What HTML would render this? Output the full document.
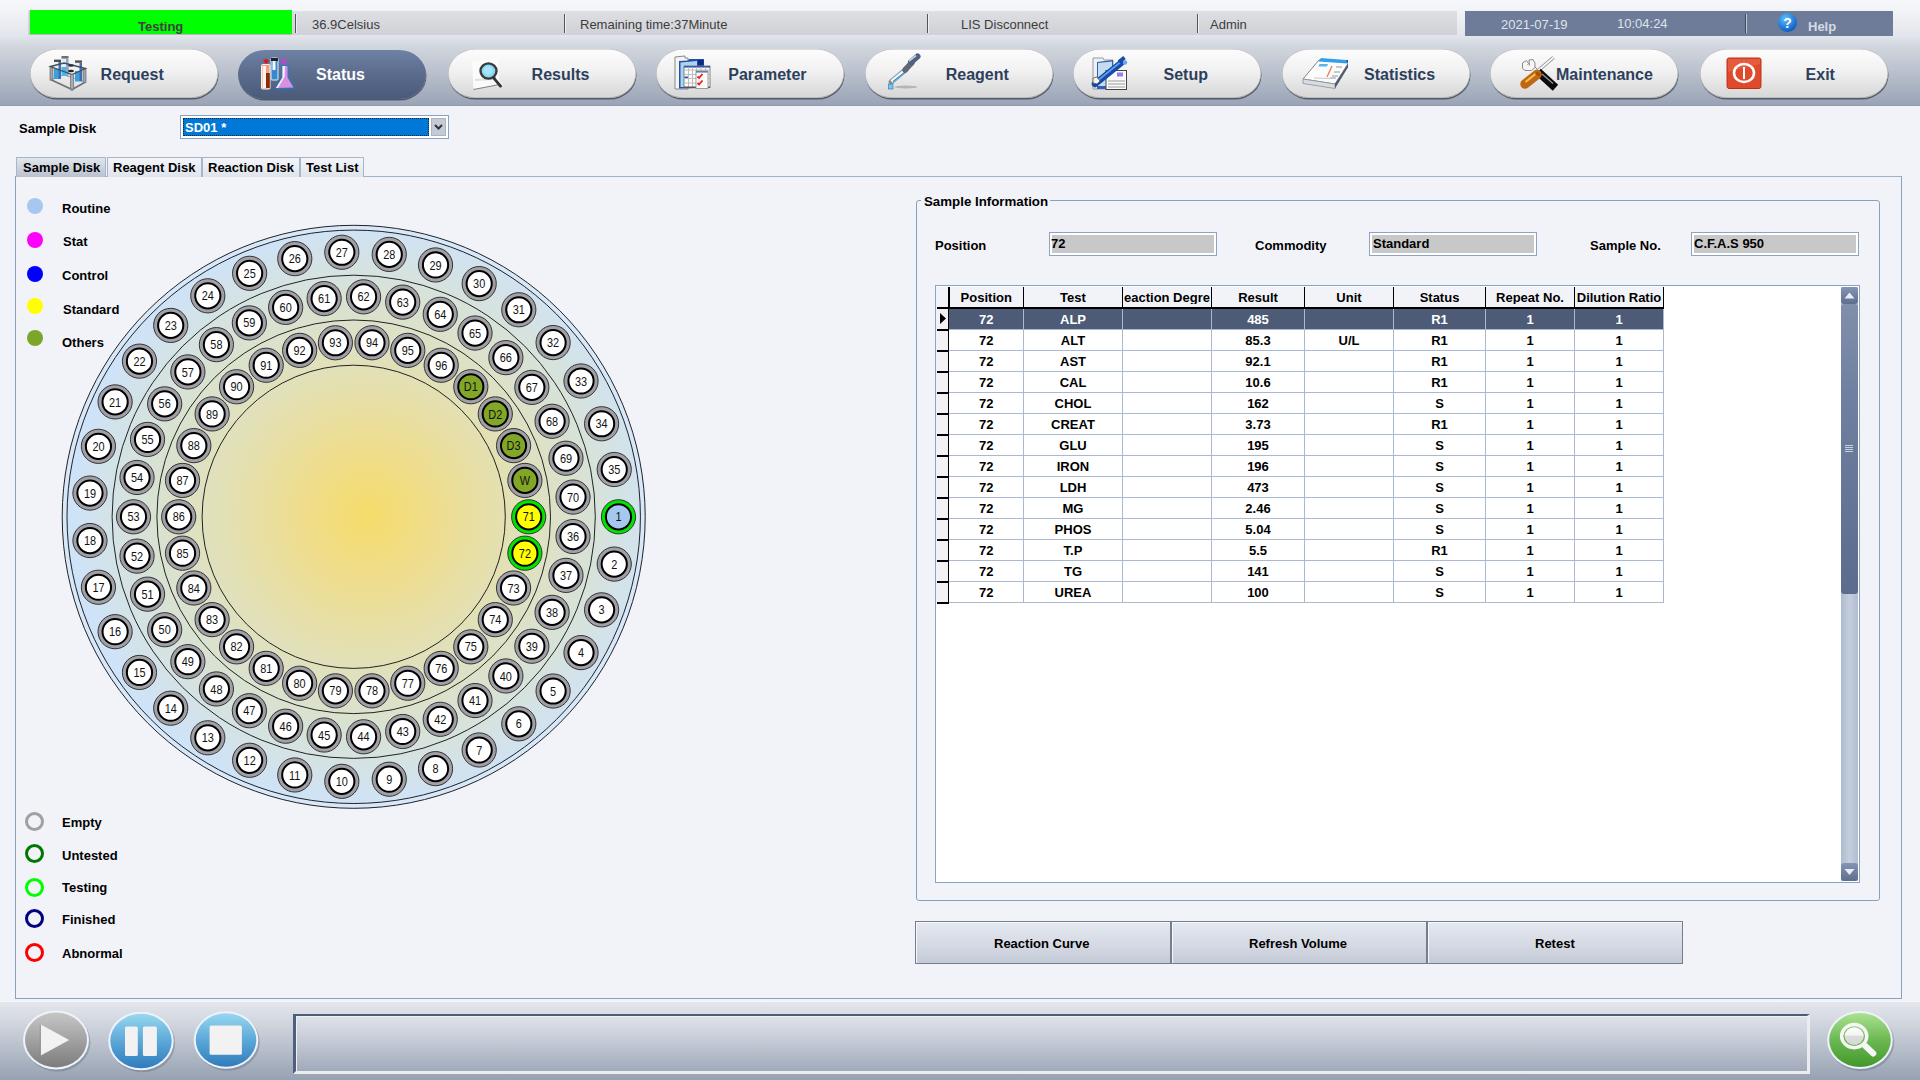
<!DOCTYPE html>
<html><head><meta charset="utf-8">
<style>
*{margin:0;padding:0;box-sizing:border-box}
html,body{width:1920px;height:1080px;overflow:hidden}
body{position:relative;background:#f2f3f8;font-family:"Liberation Sans",sans-serif;color:#000}
.a{position:absolute}
.t{position:absolute;white-space:nowrap;line-height:13px;font-size:13px}
.b{font-weight:bold}
#hdr{left:0;top:0;width:1920px;height:106px;background:linear-gradient(#f7f8fc 0px,#f3f4f8 10px,#e2e5eb 36px,#d2d6de 46px,#bac1cd 72px,#98a3b5 106px)}
#strip{left:28px;top:11px;width:1429px;height:24px;background:linear-gradient(#dedfe3,#cfd1d6)}
.sep{position:absolute;top:14px;width:2px;height:19px;border-left:1px solid #555;border-right:1px solid #f0f0f0}
.st{color:#3c3c3c}
#green{left:30px;top:10px;width:262px;height:24px;background:#00ff00;box-shadow:-1px 0 0 #c8cace, 0 1px 0 #b8bac0}
#datebox{left:1465px;top:11px;width:428px;height:25px;background:#6e7c9a}
.nav{position:absolute;top:48.5px;width:188px;height:49px;border-radius:27px/24.5px;background:linear-gradient(#fcfcfc 0%,#f1f1f1 45%,#d6d6d6 100%);box-shadow:0.5px 1.5px 0.5px rgba(70,75,90,.85), inset 0 0 0 0.6px rgba(110,110,110,.45)}
.nav.act{background:linear-gradient(#6f82a3 0%,#5a6b8c 50%,#4a5a7a 100%);box-shadow:0.5px 1.5px 0.5px rgba(50,55,70,.7)}
.nt{position:absolute;font-size:16px;line-height:16px;font-weight:bold;color:#2d3f5c;white-space:nowrap;top:67px}
.nav svg{position:absolute}
#panel{left:15px;top:176px;width:1887px;height:823px;border:1px solid #8aa0be;border-top-color:#a0b2c8}
.tab{position:absolute;top:157px;height:20px;border:1px solid #a9b6ca;border-bottom:none;background:linear-gradient(#f3f5f9,#dfe4ec)}
.tab.act{background:linear-gradient(#e2e6ed,#b9c1ce)}
.leg{position:absolute;width:16px;height:16px;border-radius:50%}
.lr{position:absolute;width:19px;height:19px;border-radius:50%;border:3px solid}
#grp{left:916px;top:200px;width:964px;height:701px;border:1px solid #86a0c0;border-radius:3px}
.fld{position:absolute;height:24px;border:1px solid #8ea2c2;background:#fff;padding:2px}
.fld div{width:100%;height:100%;background:#c8c8c8}
#tbl{left:935px;top:285px;width:925px;height:598px;border:1px solid #8ca4c4;background:#fff;overflow:hidden}
.btn{position:absolute;top:921px;height:43px;border:1px solid #747e8e;background:linear-gradient(#e6e9f0,#d3d8e2 60%,#c4cad6);box-shadow:inset 1px 1px 0 #f6f7fa}
#bot{left:0;top:1001px;width:1920px;height:79px;border-top:1px solid #f6f7fa;background:linear-gradient(#e3e6ec 0%,#d6dae2 20%,#bfc6d1 50%,#96a1b2 100%)}
</style></head><body>
<div id="hdr" class="a"></div>
<div class="a" style="left:0;top:104.5px;width:1920px;height:1.5px;background:#8e99ab"></div>
<div id="strip" class="a"></div>
<div id="green" class="a"></div>
<div class="t b" style="left:138px;top:19.5px;color:#404040">Testing</div>
<div class="sep" style="left:295px"></div>
<div class="t st" style="left:312px;top:18px">36.9Celsius</div>
<div class="sep" style="left:564px"></div>
<div class="t st" style="left:580px;top:18px">Remaining time:37Minute</div>
<div class="sep" style="left:927px"></div>
<div class="t st" style="left:961px;top:18px">LIS Disconnect</div>
<div class="sep" style="left:1197px"></div>
<div class="t st" style="left:1210px;top:18px">Admin</div>
<div id="datebox" class="a"></div>
<div class="t" style="left:1501px;top:18px;color:#dfe3ea">2021-07-19</div>
<div class="t" style="left:1617px;top:17px;color:#dfe3ea">10:04:24</div>
<div class="sep" style="left:1745px;border-left-color:#404a60;border-right-color:#c0c8d8"></div>
<svg class="a" style="left:1777px;top:12px" width="21" height="21" viewBox="0 0 21 21"><defs><radialGradient id="hg" cx="0.4" cy="0.3" r="0.7"><stop offset="0" stop-color="#5fc0ff"/><stop offset="1" stop-color="#0a5cc8"/></radialGradient></defs><circle cx="10.5" cy="10.5" r="9.5" fill="url(#hg)"/><text x="10.5" y="16" font-family="Liberation Sans" font-weight="bold" font-size="14" fill="#fff" text-anchor="middle">?</text></svg>
<div class="t b" style="left:1808px;top:20px;color:#d6dbe4">Help</div>

<div class="nav" style="left:30px;top:48.5px"></div>
<svg class="a" style="left:44px;top:50px" width="50" height="46" viewBox="0 0 50 46">
<path d="M6.5 29.5 L28 39.5 L41.5 32" fill="none" stroke="#707478" stroke-width="1.8"/>
<path d="M6.5 29.5 L20 25 L41.5 32" fill="none" stroke="#9a9ea4" stroke-width="1"/>
<rect x="6" y="16.5" width="3" height="13.5" fill="#a0a4aa" stroke="#6a6e74" stroke-width=".7"/>
<rect x="39" y="18.5" width="3" height="14" fill="#a0a4aa" stroke="#6a6e74" stroke-width=".7"/>
<rect x="17.5" y="6" width="7" height="20" fill="#e4eef6"/><rect x="17.5" y="17" width="7" height="9" fill="#4ab4ec"/><rect x="17.5" y="6" width="7" height="2.6" fill="#707070"/><rect x="22" y="9" width="2.5" height="16" fill="#90a8c0"/>
<rect x="10" y="9.6" width="7" height="19.5" fill="#e8f2fa"/><rect x="10" y="19" width="7" height="10" fill="#3aa0e0"/><rect x="10" y="9.6" width="7" height="2.4" fill="#505050"/><rect x="14.5" y="12" width="2.5" height="17" fill="#3a70b0"/>
<rect x="31" y="10.4" width="7" height="21" fill="#e8f2fa"/><rect x="31" y="21" width="7" height="10.5" fill="#3aa0e0"/><rect x="31" y="10.4" width="7" height="2.4" fill="#505050"/><rect x="35.5" y="13" width="2.5" height="18" fill="#3a70b0"/>
<path d="M6.5 16.5 L20 13 L41.5 18.5 L28 24.5 Z" fill="none" stroke="#4a4e54" stroke-width="1.3"/>
<ellipse cx="27" cy="15.5" rx="3" ry="1.2" fill="#333"/><ellipse cx="27" cy="21" rx="3" ry="1.2" fill="#222"/>
<rect x="26.5" y="24.5" width="3.2" height="15" fill="#a8acb2" stroke="#6a6e74" stroke-width=".7"/>
<circle cx="28" cy="39.5" r="1.6" fill="#8a8e94"/>
</svg>
<div class="nt" style="left:100.6px;color:#2d3f5c">Request</div>
<div class="nav act" style="left:238px;top:50px"></div>
<svg class="a" style="left:254px;top:52px" width="50" height="46" viewBox="0 0 50 46">
<path d="M9 8 L13 7 L15 9 L12 12 Z" fill="#e81010"/>
<rect x="7.5" y="12.5" width="8.5" height="24.5" rx="1" fill="#f0a080" stroke="#fff0e8" stroke-width="1"/>
<rect x="8.5" y="14" width="3.5" height="22" fill="#fff4ec"/>
<rect x="12" y="21" width="3.8" height="15" fill="#8a2c08"/>
<rect x="17" y="6" width="7" height="22" rx="1" fill="#3a88d0" stroke="#d8f0ff" stroke-width="1"/>
<rect x="17" y="6" width="7" height="3" fill="#222"/>
<rect x="18.5" y="9" width="3" height="9" fill="#f4f8ff"/>
<path d="M27.5 13 L34.5 13 L34.5 25 L41 36.5 L20.5 37 L27.5 25 Z" fill="#2878c8"/>
<path d="M28.5 14 L33.5 14 L33.5 25.5 L39.5 35.5 L22 36 L28.5 25.5 Z" fill="#d890e0"/>
<path d="M28.5 14 L31 14 L30.5 25 L24 36 L22 36 L28.5 25.5 Z" fill="#f0f4fc"/>
<circle cx="30" cy="10" r="2.3" fill="#c040d8"/><circle cx="28" cy="7" r="1.3" fill="#b050d0"/><circle cx="32.5" cy="7.5" r="1" fill="#b050d0"/>
</svg>
<div class="nt" style="left:316px;color:#fff">Status</div>
<div class="nav" style="left:448px;top:48.5px"></div>
<svg class="a" style="left:464px;top:52px" width="50" height="46" viewBox="0 0 50 46">
<path d="M8 9.5 L34 6 L35 31 L38 32 L9.5 37.5 Z" fill="#fbfbfb"/>
<path d="M9.5 37.5 L38 32" stroke="#555" stroke-width="1.2" opacity=".7"/>
<path d="M11 28 L30 27" stroke="#d0d0d0" stroke-width="2" opacity=".6"/>
<ellipse cx="24.5" cy="19" rx="8" ry="7.6" fill="#8ad8f8" stroke="#3a3a3a" stroke-width="2.4"/>
<ellipse cx="24" cy="18.5" rx="4.5" ry="4.3" fill="#a8e4fc"/>
<path d="M30 26 L36.5 34" stroke="#333" stroke-width="3" stroke-linecap="round"/>
<path d="M32 25.5 L38.5 33" stroke="#f4f4f4" stroke-width="1.4"/>
</svg>
<div class="nt" style="left:531.6px;color:#2d3f5c">Results</div>
<div class="nav" style="left:656px;top:48.5px"></div>
<svg class="a" style="left:668px;top:50px" width="50" height="46" viewBox="0 0 50 46">
<path d="M7 7 L17 6 L17 8 L20 8 L20 39 L7 39 Z" fill="#f4f4f4" stroke="#888" stroke-width="1"/>
<path d="M11 11 L20 10.5 L21 9 L36 9 L36 38 L11 38.5 Z" fill="#2a4ea8"/>
<path d="M12.5 12.5 L29 11 L29 37 L12.5 37 Z" fill="#a8d8f0"/>
<rect x="30" y="10" width="5.5" height="5" fill="#0c2a80"/>
<rect x="16" y="16" width="26" height="21.5" fill="#fcfcfc" stroke="#666" stroke-width=".8"/>
<rect x="16" y="16" width="26" height="1.6" fill="#3a5aa8"/>
<path d="M16 20 H42 M16 24.5 H42 M16 28.5 H42 M16 33 H42 M20.5 17 V37 M24.5 17 V37 M28.5 17 V37 M33 17 V37 M37.5 17 V37" stroke="#b8b8b8" stroke-width=".9"/>
<rect x="16.5" y="26.5" width="3.5" height="1.5" fill="#3050b8"/>
<rect x="16" y="36.5" width="26" height="1.5" fill="#555"/>
<rect x="28" y="21" width="12" height="17.5" fill="#fafafa" stroke="#888" stroke-width=".8"/>
<rect x="28" y="21" width="12" height="1.6" fill="#6a80a8"/>
<path d="M29.5 26.5 L31 28 L34.5 24 M29.5 33 L31 34.5 L34.5 30.5" stroke="#f01a10" stroke-width="1.8" fill="none"/>
</svg>
<div class="nt" style="left:728.3px;color:#2d3f5c">Parameter</div>
<div class="nav" style="left:865px;top:48.5px"></div>
<svg class="a" style="left:880px;top:52px" width="50" height="46" viewBox="0 0 50 46">
<ellipse cx="26" cy="35" rx="11.5" ry="1.5" fill="#8a8a8a" opacity=".5"/>
<path d="M11 30 L26.5 17" stroke="#8a8e94" stroke-width="5" stroke-linecap="round"/>
<path d="M11.5 29.5 L26 17.5" stroke="#fafafa" stroke-width="3"/>
<path d="M13 29.5 L27 18.5" stroke="#30a0e0" stroke-width="1.4"/>
<path d="M25 18 L32 10.5" stroke="#606878" stroke-width="5.5" stroke-linecap="round"/>
<path d="M31 10 L37.5 4.5" stroke="#506080" stroke-width="6" stroke-linecap="round"/>
<path d="M29 9 L36 3.5" stroke="#c8d0dc" stroke-width="1.6"/>
<rect x="8.5" y="32" width="4.5" height="5" fill="#60d0f8" stroke="#4a6a90" stroke-width=".6"/>
</svg>
<div class="nt" style="left:945.7px;color:#2d3f5c">Reagent</div>
<div class="nav" style="left:1073px;top:48.5px"></div>
<svg class="a" style="left:1088px;top:50px" width="50" height="46" viewBox="0 0 50 46">
<path d="M5 8 L15 8 L16 10 L25 10 L25 39 L5 39 Z" fill="#f0f0f0" stroke="#999" stroke-width="1"/>
<path d="M9 12 L25 10 L25 39 L9 39 Z" fill="#3060b8"/>
<path d="M10 13 L24 11.5 L24 36 L10 36 Z" fill="#c4dcf0"/>
<rect x="18" y="20.5" width="20.5" height="19" fill="#fafafa" stroke="#444" stroke-width="1"/>
<rect x="29" y="22.5" width="6" height="4" fill="#8a80f0"/>
<path d="M20 31 H37 M20 34 H37 M20 37 H37" stroke="#999" stroke-width="1.2"/>
<path d="M7 34 L33 13" stroke="#1848a8" stroke-width="6.5" stroke-linecap="round"/>
<path d="M8 32 L32 12.5" stroke="#5aa0e8" stroke-width="1.8"/>
<path d="M31 12 L36.5 7.5" stroke="#1a4aa8" stroke-width="4"/>
<circle cx="37" cy="12.5" r="2.2" fill="#60a8f0"/>
<path d="M5 28 L9 27 L12 31 L9 34 L5 33 Z" fill="#f4f4f4" stroke="#555" stroke-width=".8"/>
</svg>
<div class="nt" style="left:1163.5px;color:#2d3f5c">Setup</div>
<div class="nav" style="left:1282px;top:48.5px"></div>
<svg class="a" style="left:1298px;top:50px" width="50" height="46" viewBox="0 0 50 46">
<path d="M5 29 L21 10 L52 10.5 L37 34 Z" fill="#fcfcfc" stroke="#777" stroke-width=".9"/>
<path d="M5 29 L37 34 L37 38.5 L5 33.5 Z" fill="#d8dde4" stroke="#8a9098" stroke-width=".8"/>
<path d="M37 34 L52 10.5 L52 14 L37 38.5 Z" fill="#4a5a70"/>
<path d="M23 8 L52 10.5 L49.5 13.5 L20.5 11.5 Z" fill="#30a0e8"/>
<path d="M48 10.5 L52 10.5 L50.5 13.5 Z" fill="#0a3a90"/>
<path d="M21.5 14 L30 14 L29 16.5 L20.5 16.5 Z" fill="#30a0e8" opacity=".8"/>
<path d="M34 16 L29 27" stroke="#f07040" stroke-width="1.2"/>
<path d="M38 17 L44 17 M36 22 L42 22 M34 26 L40 26 M32 28 L38 28" stroke="#b8b8b8" stroke-width="1.5"/>
<path d="M16 28 L32 28.5" stroke="#c8c8c8" stroke-width="1"/>
</svg>
<div class="nt" style="left:1364px;color:#2d3f5c">Statistics</div>
<div class="nav" style="left:1490px;top:48.5px"></div>
<svg class="a" style="left:1514px;top:50px" width="50" height="46" viewBox="0 0 50 46">
<path d="M8.5 13 L12.5 10.5 L14.5 13.5 L13 15.5 L15.5 16 L15 10 L19 9.5 L21 13 L21 17 L24.5 20.5" fill="#f6f6f6" stroke="#8a8a8a" stroke-width="1"/>
<path d="M8.5 13 L8.5 18.5 L11 20.5 L17.5 20.5 L21 17.5" fill="#f6f6f6" stroke="#8a8a8a" stroke-width="1"/>
<path d="M23 21.5 L39.5 7.5" stroke="#8a8a8a" stroke-width="3.6"/>
<path d="M23 21.5 L39.5 7.5" stroke="#fafafa" stroke-width="1.8"/>
<path d="M27 24.5 L38.5 35" stroke="#0a0a0a" stroke-width="8" stroke-linecap="square"/>
<path d="M28 24 L39 33.5" stroke="#9a9a9a" stroke-width="1.2"/>
<path d="M11 34 L23 24.5" stroke="#c06810" stroke-width="9.5" stroke-linecap="round"/>
<path d="M11.5 32 L21.5 24" stroke="#f4c060" stroke-width="2"/>
<path d="M22 23 L26 25" stroke="#a05008" stroke-width="3"/>
</svg>
<div class="nt" style="left:1556px;color:#2d3f5c">Maintenance</div>
<div class="nav" style="left:1700px;top:48.5px"></div>
<svg class="a" style="left:1720px;top:50px" width="50" height="46" viewBox="0 0 50 46">
<rect x="6.5" y="7.5" width="35" height="31.5" rx="2" fill="#fff"/>
<rect x="7" y="8" width="34" height="30.5" rx="2" fill="#e04a2c" stroke="#b83010" stroke-width="1"/>
<path d="M8 9 L40 9 L40 14 L8 22 Z" fill="#f07a60" opacity=".35"/>
<ellipse cx="24" cy="23" rx="10" ry="9" fill="none" stroke="#fff" stroke-width="2.6"/>
<rect x="23" y="17" width="2" height="12" fill="#fff"/>
</svg>
<div class="nt" style="left:1805.6px;color:#2d3f5c">Exit</div>

<div class="t b" style="left:19px;top:122px">Sample Disk</div>
<div class="a" style="left:180px;top:115px;width:269px;height:24px;border:1px solid #8ca2c4;background:#fff"></div>
<div class="a" style="left:183px;top:118px;width:246px;height:18px;background:#0078d7;outline:1px dotted #222;outline-offset:-1px"></div>
<div class="t b" style="left:185px;top:121px;color:#fff">SD01 *</div>
<div class="a" style="left:431px;top:118px;width:15px;height:18px;background:#c3cbd9;border:1px solid #aab4c6"></div>
<svg class="a" style="left:433px;top:122px" width="11" height="10" viewBox="0 0 11 10"><path d="M2 3 L5.5 6.5 L9 3" fill="none" stroke="#333" stroke-width="2"/></svg>

<div id="panel" class="a"></div>
<div class="tab act" style="left:16px;width:90px"></div>
<div class="tab" style="left:107px;width:95px"></div>
<div class="tab" style="left:202px;width:98px"></div>
<div class="tab" style="left:300px;width:64px"></div>
<div class="t b" style="left:23px;top:161px">Sample Disk</div>
<div class="t b" style="left:113px;top:161px">Reagent Disk</div>
<div class="t b" style="left:208px;top:161px">Reaction Disk</div>
<div class="t b" style="left:306px;top:161px">Test List</div>

<div class="leg" style="left:26.5px;top:197.8px;background:#a6c8ee"></div>
<div class="t b" style="left:62px;top:202px">Routine</div>
<div class="leg" style="left:26.5px;top:231.7px;background:#ff00ff"></div>
<div class="t b" style="left:63px;top:235px">Stat</div>
<div class="leg" style="left:26.5px;top:265.7px;background:#0000ff"></div>
<div class="t b" style="left:62px;top:269px">Control</div>
<div class="leg" style="left:26.5px;top:297.8px;background:#ffff00"></div>
<div class="t b" style="left:63px;top:303px">Standard</div>
<div class="leg" style="left:26.5px;top:329.5px;background:#7aa62a"></div>
<div class="t b" style="left:62px;top:336px">Others</div>

<svg width="1920" height="1080" style="position:absolute;left:0;top:0">
<defs>
<radialGradient id="dg" cx="368" cy="515" r="292" gradientUnits="userSpaceOnUse">
<stop offset="0" stop-color="#f6dc6a"/>
<stop offset="0.22" stop-color="#efdd8c"/>
<stop offset="0.5" stop-color="#e2e0b6"/>
<stop offset="0.75" stop-color="#d8e2d4"/>
<stop offset="1" stop-color="#cfe3f8"/>
</radialGradient>
</defs>
<circle cx="353.7" cy="516.8" r="291.5" fill="#d6e8fa" stroke="#222" stroke-width="1"/>
<circle cx="353.7" cy="516.8" r="286.7" fill="url(#dg)" stroke="#222" stroke-width="1"/>
<circle cx="353.7" cy="516.8" r="241.6" fill="none" stroke="#222" stroke-width="1"/>
<circle cx="353.7" cy="516.8" r="196.8" fill="none" stroke="#222" stroke-width="1"/>
<circle cx="353.7" cy="516.8" r="151.6" fill="none" stroke="#222" stroke-width="1"/>
<g font-family="Liberation Sans, sans-serif" font-size="12.4" text-anchor="middle" fill="#111">
<circle cx="618.50" cy="516.80" r="17.1" fill="#00e400" stroke="#333" stroke-width="1"/><circle cx="618.50" cy="516.80" r="12.6" fill="#a6c8ee" stroke="#000" stroke-width="2"/><text transform="translate(618.50,521.40) scale(0.88,1.02)">1</text>
<circle cx="614.24" cy="564.08" r="17.1" fill="#a0a0a6" stroke="#333" stroke-width="1"/><circle cx="614.24" cy="564.08" r="12.6" fill="#ffffff" stroke="#000" stroke-width="2"/><text transform="translate(614.24,568.68) scale(0.88,1.02)">2</text>
<circle cx="601.61" cy="609.84" r="17.1" fill="#a0a0a6" stroke="#333" stroke-width="1"/><circle cx="601.61" cy="609.84" r="12.6" fill="#ffffff" stroke="#000" stroke-width="2"/><text transform="translate(601.61,614.44) scale(0.88,1.02)">3</text>
<circle cx="581.02" cy="652.62" r="17.1" fill="#a0a0a6" stroke="#333" stroke-width="1"/><circle cx="581.02" cy="652.62" r="12.6" fill="#ffffff" stroke="#000" stroke-width="2"/><text transform="translate(581.02,657.22) scale(0.88,1.02)">4</text>
<circle cx="553.11" cy="691.02" r="17.1" fill="#a0a0a6" stroke="#333" stroke-width="1"/><circle cx="553.11" cy="691.02" r="12.6" fill="#ffffff" stroke="#000" stroke-width="2"/><text transform="translate(553.11,695.62) scale(0.88,1.02)">5</text>
<circle cx="518.80" cy="723.83" r="17.1" fill="#a0a0a6" stroke="#333" stroke-width="1"/><circle cx="518.80" cy="723.83" r="12.6" fill="#ffffff" stroke="#000" stroke-width="2"/><text transform="translate(518.80,728.43) scale(0.88,1.02)">6</text>
<circle cx="479.18" cy="749.98" r="17.1" fill="#a0a0a6" stroke="#333" stroke-width="1"/><circle cx="479.18" cy="749.98" r="12.6" fill="#ffffff" stroke="#000" stroke-width="2"/><text transform="translate(479.18,754.58) scale(0.88,1.02)">7</text>
<circle cx="435.53" cy="768.64" r="17.1" fill="#a0a0a6" stroke="#333" stroke-width="1"/><circle cx="435.53" cy="768.64" r="12.6" fill="#ffffff" stroke="#000" stroke-width="2"/><text transform="translate(435.53,773.24) scale(0.88,1.02)">8</text>
<circle cx="389.24" cy="779.20" r="17.1" fill="#a0a0a6" stroke="#333" stroke-width="1"/><circle cx="389.24" cy="779.20" r="12.6" fill="#ffffff" stroke="#000" stroke-width="2"/><text transform="translate(389.24,783.80) scale(0.88,1.02)">9</text>
<circle cx="341.82" cy="781.33" r="17.1" fill="#a0a0a6" stroke="#333" stroke-width="1"/><circle cx="341.82" cy="781.33" r="12.6" fill="#ffffff" stroke="#000" stroke-width="2"/><text transform="translate(341.82,785.93) scale(0.88,1.02)">10</text>
<circle cx="294.78" cy="774.96" r="17.1" fill="#a0a0a6" stroke="#333" stroke-width="1"/><circle cx="294.78" cy="774.96" r="12.6" fill="#ffffff" stroke="#000" stroke-width="2"/><text transform="translate(294.78,779.56) scale(0.88,1.02)">11</text>
<circle cx="249.63" cy="760.29" r="17.1" fill="#a0a0a6" stroke="#333" stroke-width="1"/><circle cx="249.63" cy="760.29" r="12.6" fill="#ffffff" stroke="#000" stroke-width="2"/><text transform="translate(249.63,764.89) scale(0.88,1.02)">12</text>
<circle cx="207.82" cy="737.79" r="17.1" fill="#a0a0a6" stroke="#333" stroke-width="1"/><circle cx="207.82" cy="737.79" r="12.6" fill="#ffffff" stroke="#000" stroke-width="2"/><text transform="translate(207.82,742.39) scale(0.88,1.02)">13</text>
<circle cx="170.71" cy="708.20" r="17.1" fill="#a0a0a6" stroke="#333" stroke-width="1"/><circle cx="170.71" cy="708.20" r="12.6" fill="#ffffff" stroke="#000" stroke-width="2"/><text transform="translate(170.71,712.80) scale(0.88,1.02)">14</text>
<circle cx="139.47" cy="672.45" r="17.1" fill="#a0a0a6" stroke="#333" stroke-width="1"/><circle cx="139.47" cy="672.45" r="12.6" fill="#ffffff" stroke="#000" stroke-width="2"/><text transform="translate(139.47,677.05) scale(0.88,1.02)">15</text>
<circle cx="115.12" cy="631.69" r="17.1" fill="#a0a0a6" stroke="#333" stroke-width="1"/><circle cx="115.12" cy="631.69" r="12.6" fill="#ffffff" stroke="#000" stroke-width="2"/><text transform="translate(115.12,636.29) scale(0.88,1.02)">16</text>
<circle cx="98.44" cy="587.25" r="17.1" fill="#a0a0a6" stroke="#333" stroke-width="1"/><circle cx="98.44" cy="587.25" r="12.6" fill="#ffffff" stroke="#000" stroke-width="2"/><text transform="translate(98.44,591.85) scale(0.88,1.02)">17</text>
<circle cx="89.97" cy="540.54" r="17.1" fill="#a0a0a6" stroke="#333" stroke-width="1"/><circle cx="89.97" cy="540.54" r="12.6" fill="#ffffff" stroke="#000" stroke-width="2"/><text transform="translate(89.97,545.14) scale(0.88,1.02)">18</text>
<circle cx="89.97" cy="493.06" r="17.1" fill="#a0a0a6" stroke="#333" stroke-width="1"/><circle cx="89.97" cy="493.06" r="12.6" fill="#ffffff" stroke="#000" stroke-width="2"/><text transform="translate(89.97,497.66) scale(0.88,1.02)">19</text>
<circle cx="98.44" cy="446.35" r="17.1" fill="#a0a0a6" stroke="#333" stroke-width="1"/><circle cx="98.44" cy="446.35" r="12.6" fill="#ffffff" stroke="#000" stroke-width="2"/><text transform="translate(98.44,450.95) scale(0.88,1.02)">20</text>
<circle cx="115.12" cy="401.91" r="17.1" fill="#a0a0a6" stroke="#333" stroke-width="1"/><circle cx="115.12" cy="401.91" r="12.6" fill="#ffffff" stroke="#000" stroke-width="2"/><text transform="translate(115.12,406.51) scale(0.88,1.02)">21</text>
<circle cx="139.47" cy="361.15" r="17.1" fill="#a0a0a6" stroke="#333" stroke-width="1"/><circle cx="139.47" cy="361.15" r="12.6" fill="#ffffff" stroke="#000" stroke-width="2"/><text transform="translate(139.47,365.75) scale(0.88,1.02)">22</text>
<circle cx="170.71" cy="325.40" r="17.1" fill="#a0a0a6" stroke="#333" stroke-width="1"/><circle cx="170.71" cy="325.40" r="12.6" fill="#ffffff" stroke="#000" stroke-width="2"/><text transform="translate(170.71,330.00) scale(0.88,1.02)">23</text>
<circle cx="207.82" cy="295.81" r="17.1" fill="#a0a0a6" stroke="#333" stroke-width="1"/><circle cx="207.82" cy="295.81" r="12.6" fill="#ffffff" stroke="#000" stroke-width="2"/><text transform="translate(207.82,300.41) scale(0.88,1.02)">24</text>
<circle cx="249.63" cy="273.31" r="17.1" fill="#a0a0a6" stroke="#333" stroke-width="1"/><circle cx="249.63" cy="273.31" r="12.6" fill="#ffffff" stroke="#000" stroke-width="2"/><text transform="translate(249.63,277.91) scale(0.88,1.02)">25</text>
<circle cx="294.78" cy="258.64" r="17.1" fill="#a0a0a6" stroke="#333" stroke-width="1"/><circle cx="294.78" cy="258.64" r="12.6" fill="#ffffff" stroke="#000" stroke-width="2"/><text transform="translate(294.78,263.24) scale(0.88,1.02)">26</text>
<circle cx="341.82" cy="252.27" r="17.1" fill="#a0a0a6" stroke="#333" stroke-width="1"/><circle cx="341.82" cy="252.27" r="12.6" fill="#ffffff" stroke="#000" stroke-width="2"/><text transform="translate(341.82,256.87) scale(0.88,1.02)">27</text>
<circle cx="389.24" cy="254.40" r="17.1" fill="#a0a0a6" stroke="#333" stroke-width="1"/><circle cx="389.24" cy="254.40" r="12.6" fill="#ffffff" stroke="#000" stroke-width="2"/><text transform="translate(389.24,259.00) scale(0.88,1.02)">28</text>
<circle cx="435.53" cy="264.96" r="17.1" fill="#a0a0a6" stroke="#333" stroke-width="1"/><circle cx="435.53" cy="264.96" r="12.6" fill="#ffffff" stroke="#000" stroke-width="2"/><text transform="translate(435.53,269.56) scale(0.88,1.02)">29</text>
<circle cx="479.18" cy="283.62" r="17.1" fill="#a0a0a6" stroke="#333" stroke-width="1"/><circle cx="479.18" cy="283.62" r="12.6" fill="#ffffff" stroke="#000" stroke-width="2"/><text transform="translate(479.18,288.22) scale(0.88,1.02)">30</text>
<circle cx="518.80" cy="309.77" r="17.1" fill="#a0a0a6" stroke="#333" stroke-width="1"/><circle cx="518.80" cy="309.77" r="12.6" fill="#ffffff" stroke="#000" stroke-width="2"/><text transform="translate(518.80,314.37) scale(0.88,1.02)">31</text>
<circle cx="553.11" cy="342.58" r="17.1" fill="#a0a0a6" stroke="#333" stroke-width="1"/><circle cx="553.11" cy="342.58" r="12.6" fill="#ffffff" stroke="#000" stroke-width="2"/><text transform="translate(553.11,347.18) scale(0.88,1.02)">32</text>
<circle cx="581.02" cy="380.98" r="17.1" fill="#a0a0a6" stroke="#333" stroke-width="1"/><circle cx="581.02" cy="380.98" r="12.6" fill="#ffffff" stroke="#000" stroke-width="2"/><text transform="translate(581.02,385.58) scale(0.88,1.02)">33</text>
<circle cx="601.61" cy="423.76" r="17.1" fill="#a0a0a6" stroke="#333" stroke-width="1"/><circle cx="601.61" cy="423.76" r="12.6" fill="#ffffff" stroke="#000" stroke-width="2"/><text transform="translate(601.61,428.36) scale(0.88,1.02)">34</text>
<circle cx="614.24" cy="469.52" r="17.1" fill="#a0a0a6" stroke="#333" stroke-width="1"/><circle cx="614.24" cy="469.52" r="12.6" fill="#ffffff" stroke="#000" stroke-width="2"/><text transform="translate(614.24,474.12) scale(0.88,1.02)">35</text>
<circle cx="573.01" cy="536.54" r="17.1" fill="#a0a0a6" stroke="#333" stroke-width="1"/><circle cx="573.01" cy="536.54" r="12.6" fill="#ffffff" stroke="#000" stroke-width="2"/><text transform="translate(573.01,541.14) scale(0.88,1.02)">36</text>
<circle cx="565.96" cy="575.38" r="17.1" fill="#a0a0a6" stroke="#333" stroke-width="1"/><circle cx="565.96" cy="575.38" r="12.6" fill="#ffffff" stroke="#000" stroke-width="2"/><text transform="translate(565.96,579.98) scale(0.88,1.02)">37</text>
<circle cx="552.09" cy="612.34" r="17.1" fill="#a0a0a6" stroke="#333" stroke-width="1"/><circle cx="552.09" cy="612.34" r="12.6" fill="#ffffff" stroke="#000" stroke-width="2"/><text transform="translate(552.09,616.94) scale(0.88,1.02)">38</text>
<circle cx="531.85" cy="646.23" r="17.1" fill="#a0a0a6" stroke="#333" stroke-width="1"/><circle cx="531.85" cy="646.23" r="12.6" fill="#ffffff" stroke="#000" stroke-width="2"/><text transform="translate(531.85,650.83) scale(0.88,1.02)">39</text>
<circle cx="505.87" cy="675.96" r="17.1" fill="#a0a0a6" stroke="#333" stroke-width="1"/><circle cx="505.87" cy="675.96" r="12.6" fill="#ffffff" stroke="#000" stroke-width="2"/><text transform="translate(505.87,680.56) scale(0.88,1.02)">40</text>
<circle cx="475.01" cy="700.57" r="17.1" fill="#a0a0a6" stroke="#333" stroke-width="1"/><circle cx="475.01" cy="700.57" r="12.6" fill="#ffffff" stroke="#000" stroke-width="2"/><text transform="translate(475.01,705.17) scale(0.88,1.02)">41</text>
<circle cx="440.24" cy="719.28" r="17.1" fill="#a0a0a6" stroke="#333" stroke-width="1"/><circle cx="440.24" cy="719.28" r="12.6" fill="#ffffff" stroke="#000" stroke-width="2"/><text transform="translate(440.24,723.88) scale(0.88,1.02)">42</text>
<circle cx="402.70" cy="731.48" r="17.1" fill="#a0a0a6" stroke="#333" stroke-width="1"/><circle cx="402.70" cy="731.48" r="12.6" fill="#ffffff" stroke="#000" stroke-width="2"/><text transform="translate(402.70,736.08) scale(0.88,1.02)">43</text>
<circle cx="363.58" cy="736.78" r="17.1" fill="#a0a0a6" stroke="#333" stroke-width="1"/><circle cx="363.58" cy="736.78" r="12.6" fill="#ffffff" stroke="#000" stroke-width="2"/><text transform="translate(363.58,741.38) scale(0.88,1.02)">44</text>
<circle cx="324.14" cy="735.01" r="17.1" fill="#a0a0a6" stroke="#333" stroke-width="1"/><circle cx="324.14" cy="735.01" r="12.6" fill="#ffffff" stroke="#000" stroke-width="2"/><text transform="translate(324.14,739.61) scale(0.88,1.02)">45</text>
<circle cx="285.65" cy="726.22" r="17.1" fill="#a0a0a6" stroke="#333" stroke-width="1"/><circle cx="285.65" cy="726.22" r="12.6" fill="#ffffff" stroke="#000" stroke-width="2"/><text transform="translate(285.65,730.82) scale(0.88,1.02)">46</text>
<circle cx="249.35" cy="710.71" r="17.1" fill="#a0a0a6" stroke="#333" stroke-width="1"/><circle cx="249.35" cy="710.71" r="12.6" fill="#ffffff" stroke="#000" stroke-width="2"/><text transform="translate(249.35,715.31) scale(0.88,1.02)">47</text>
<circle cx="216.41" cy="688.96" r="17.1" fill="#a0a0a6" stroke="#333" stroke-width="1"/><circle cx="216.41" cy="688.96" r="12.6" fill="#ffffff" stroke="#000" stroke-width="2"/><text transform="translate(216.41,693.56) scale(0.88,1.02)">48</text>
<circle cx="187.87" cy="661.68" r="17.1" fill="#a0a0a6" stroke="#333" stroke-width="1"/><circle cx="187.87" cy="661.68" r="12.6" fill="#ffffff" stroke="#000" stroke-width="2"/><text transform="translate(187.87,666.28) scale(0.88,1.02)">49</text>
<circle cx="164.67" cy="629.74" r="17.1" fill="#a0a0a6" stroke="#333" stroke-width="1"/><circle cx="164.67" cy="629.74" r="12.6" fill="#ffffff" stroke="#000" stroke-width="2"/><text transform="translate(164.67,634.34) scale(0.88,1.02)">50</text>
<circle cx="147.54" cy="594.17" r="17.1" fill="#a0a0a6" stroke="#333" stroke-width="1"/><circle cx="147.54" cy="594.17" r="12.6" fill="#ffffff" stroke="#000" stroke-width="2"/><text transform="translate(147.54,598.77) scale(0.88,1.02)">51</text>
<circle cx="137.04" cy="556.12" r="17.1" fill="#a0a0a6" stroke="#333" stroke-width="1"/><circle cx="137.04" cy="556.12" r="12.6" fill="#ffffff" stroke="#000" stroke-width="2"/><text transform="translate(137.04,560.72) scale(0.88,1.02)">52</text>
<circle cx="133.50" cy="516.80" r="17.1" fill="#a0a0a6" stroke="#333" stroke-width="1"/><circle cx="133.50" cy="516.80" r="12.6" fill="#ffffff" stroke="#000" stroke-width="2"/><text transform="translate(133.50,521.40) scale(0.88,1.02)">53</text>
<circle cx="137.04" cy="477.48" r="17.1" fill="#a0a0a6" stroke="#333" stroke-width="1"/><circle cx="137.04" cy="477.48" r="12.6" fill="#ffffff" stroke="#000" stroke-width="2"/><text transform="translate(137.04,482.08) scale(0.88,1.02)">54</text>
<circle cx="147.54" cy="439.43" r="17.1" fill="#a0a0a6" stroke="#333" stroke-width="1"/><circle cx="147.54" cy="439.43" r="12.6" fill="#ffffff" stroke="#000" stroke-width="2"/><text transform="translate(147.54,444.03) scale(0.88,1.02)">55</text>
<circle cx="164.67" cy="403.86" r="17.1" fill="#a0a0a6" stroke="#333" stroke-width="1"/><circle cx="164.67" cy="403.86" r="12.6" fill="#ffffff" stroke="#000" stroke-width="2"/><text transform="translate(164.67,408.46) scale(0.88,1.02)">56</text>
<circle cx="187.87" cy="371.92" r="17.1" fill="#a0a0a6" stroke="#333" stroke-width="1"/><circle cx="187.87" cy="371.92" r="12.6" fill="#ffffff" stroke="#000" stroke-width="2"/><text transform="translate(187.87,376.52) scale(0.88,1.02)">57</text>
<circle cx="216.41" cy="344.64" r="17.1" fill="#a0a0a6" stroke="#333" stroke-width="1"/><circle cx="216.41" cy="344.64" r="12.6" fill="#ffffff" stroke="#000" stroke-width="2"/><text transform="translate(216.41,349.24) scale(0.88,1.02)">58</text>
<circle cx="249.35" cy="322.89" r="17.1" fill="#a0a0a6" stroke="#333" stroke-width="1"/><circle cx="249.35" cy="322.89" r="12.6" fill="#ffffff" stroke="#000" stroke-width="2"/><text transform="translate(249.35,327.49) scale(0.88,1.02)">59</text>
<circle cx="285.65" cy="307.38" r="17.1" fill="#a0a0a6" stroke="#333" stroke-width="1"/><circle cx="285.65" cy="307.38" r="12.6" fill="#ffffff" stroke="#000" stroke-width="2"/><text transform="translate(285.65,311.98) scale(0.88,1.02)">60</text>
<circle cx="324.14" cy="298.59" r="17.1" fill="#a0a0a6" stroke="#333" stroke-width="1"/><circle cx="324.14" cy="298.59" r="12.6" fill="#ffffff" stroke="#000" stroke-width="2"/><text transform="translate(324.14,303.19) scale(0.88,1.02)">61</text>
<circle cx="363.58" cy="296.82" r="17.1" fill="#a0a0a6" stroke="#333" stroke-width="1"/><circle cx="363.58" cy="296.82" r="12.6" fill="#ffffff" stroke="#000" stroke-width="2"/><text transform="translate(363.58,301.42) scale(0.88,1.02)">62</text>
<circle cx="402.70" cy="302.12" r="17.1" fill="#a0a0a6" stroke="#333" stroke-width="1"/><circle cx="402.70" cy="302.12" r="12.6" fill="#ffffff" stroke="#000" stroke-width="2"/><text transform="translate(402.70,306.72) scale(0.88,1.02)">63</text>
<circle cx="440.24" cy="314.32" r="17.1" fill="#a0a0a6" stroke="#333" stroke-width="1"/><circle cx="440.24" cy="314.32" r="12.6" fill="#ffffff" stroke="#000" stroke-width="2"/><text transform="translate(440.24,318.92) scale(0.88,1.02)">64</text>
<circle cx="475.01" cy="333.03" r="17.1" fill="#a0a0a6" stroke="#333" stroke-width="1"/><circle cx="475.01" cy="333.03" r="12.6" fill="#ffffff" stroke="#000" stroke-width="2"/><text transform="translate(475.01,337.63) scale(0.88,1.02)">65</text>
<circle cx="505.87" cy="357.64" r="17.1" fill="#a0a0a6" stroke="#333" stroke-width="1"/><circle cx="505.87" cy="357.64" r="12.6" fill="#ffffff" stroke="#000" stroke-width="2"/><text transform="translate(505.87,362.24) scale(0.88,1.02)">66</text>
<circle cx="531.85" cy="387.37" r="17.1" fill="#a0a0a6" stroke="#333" stroke-width="1"/><circle cx="531.85" cy="387.37" r="12.6" fill="#ffffff" stroke="#000" stroke-width="2"/><text transform="translate(531.85,391.97) scale(0.88,1.02)">67</text>
<circle cx="552.09" cy="421.26" r="17.1" fill="#a0a0a6" stroke="#333" stroke-width="1"/><circle cx="552.09" cy="421.26" r="12.6" fill="#ffffff" stroke="#000" stroke-width="2"/><text transform="translate(552.09,425.86) scale(0.88,1.02)">68</text>
<circle cx="565.96" cy="458.22" r="17.1" fill="#a0a0a6" stroke="#333" stroke-width="1"/><circle cx="565.96" cy="458.22" r="12.6" fill="#ffffff" stroke="#000" stroke-width="2"/><text transform="translate(565.96,462.82) scale(0.88,1.02)">69</text>
<circle cx="573.01" cy="497.06" r="17.1" fill="#a0a0a6" stroke="#333" stroke-width="1"/><circle cx="573.01" cy="497.06" r="12.6" fill="#ffffff" stroke="#000" stroke-width="2"/><text transform="translate(573.01,501.66) scale(0.88,1.02)">70</text>
<circle cx="528.70" cy="516.80" r="17.1" fill="#00e400" stroke="#333" stroke-width="1"/><circle cx="528.70" cy="516.80" r="12.6" fill="#ffff00" stroke="#000" stroke-width="2"/><text transform="translate(528.70,521.40) scale(0.88,1.02)">71</text>
<circle cx="524.88" cy="553.18" r="17.1" fill="#00e400" stroke="#333" stroke-width="1"/><circle cx="524.88" cy="553.18" r="12.6" fill="#ffff00" stroke="#000" stroke-width="2"/><text transform="translate(524.88,557.78) scale(0.88,1.02)">72</text>
<circle cx="513.57" cy="587.98" r="17.1" fill="#a0a0a6" stroke="#333" stroke-width="1"/><circle cx="513.57" cy="587.98" r="12.6" fill="#ffffff" stroke="#000" stroke-width="2"/><text transform="translate(513.57,592.58) scale(0.88,1.02)">73</text>
<circle cx="495.28" cy="619.66" r="17.1" fill="#a0a0a6" stroke="#333" stroke-width="1"/><circle cx="495.28" cy="619.66" r="12.6" fill="#ffffff" stroke="#000" stroke-width="2"/><text transform="translate(495.28,624.26) scale(0.88,1.02)">74</text>
<circle cx="470.80" cy="646.85" r="17.1" fill="#a0a0a6" stroke="#333" stroke-width="1"/><circle cx="470.80" cy="646.85" r="12.6" fill="#ffffff" stroke="#000" stroke-width="2"/><text transform="translate(470.80,651.45) scale(0.88,1.02)">75</text>
<circle cx="441.20" cy="668.35" r="17.1" fill="#a0a0a6" stroke="#333" stroke-width="1"/><circle cx="441.20" cy="668.35" r="12.6" fill="#ffffff" stroke="#000" stroke-width="2"/><text transform="translate(441.20,672.95) scale(0.88,1.02)">76</text>
<circle cx="407.78" cy="683.23" r="17.1" fill="#a0a0a6" stroke="#333" stroke-width="1"/><circle cx="407.78" cy="683.23" r="12.6" fill="#ffffff" stroke="#000" stroke-width="2"/><text transform="translate(407.78,687.83) scale(0.88,1.02)">77</text>
<circle cx="371.99" cy="690.84" r="17.1" fill="#a0a0a6" stroke="#333" stroke-width="1"/><circle cx="371.99" cy="690.84" r="12.6" fill="#ffffff" stroke="#000" stroke-width="2"/><text transform="translate(371.99,695.44) scale(0.88,1.02)">78</text>
<circle cx="335.41" cy="690.84" r="17.1" fill="#a0a0a6" stroke="#333" stroke-width="1"/><circle cx="335.41" cy="690.84" r="12.6" fill="#ffffff" stroke="#000" stroke-width="2"/><text transform="translate(335.41,695.44) scale(0.88,1.02)">79</text>
<circle cx="299.62" cy="683.23" r="17.1" fill="#a0a0a6" stroke="#333" stroke-width="1"/><circle cx="299.62" cy="683.23" r="12.6" fill="#ffffff" stroke="#000" stroke-width="2"/><text transform="translate(299.62,687.83) scale(0.88,1.02)">80</text>
<circle cx="266.20" cy="668.35" r="17.1" fill="#a0a0a6" stroke="#333" stroke-width="1"/><circle cx="266.20" cy="668.35" r="12.6" fill="#ffffff" stroke="#000" stroke-width="2"/><text transform="translate(266.20,672.95) scale(0.88,1.02)">81</text>
<circle cx="236.60" cy="646.85" r="17.1" fill="#a0a0a6" stroke="#333" stroke-width="1"/><circle cx="236.60" cy="646.85" r="12.6" fill="#ffffff" stroke="#000" stroke-width="2"/><text transform="translate(236.60,651.45) scale(0.88,1.02)">82</text>
<circle cx="212.12" cy="619.66" r="17.1" fill="#a0a0a6" stroke="#333" stroke-width="1"/><circle cx="212.12" cy="619.66" r="12.6" fill="#ffffff" stroke="#000" stroke-width="2"/><text transform="translate(212.12,624.26) scale(0.88,1.02)">83</text>
<circle cx="193.83" cy="587.98" r="17.1" fill="#a0a0a6" stroke="#333" stroke-width="1"/><circle cx="193.83" cy="587.98" r="12.6" fill="#ffffff" stroke="#000" stroke-width="2"/><text transform="translate(193.83,592.58) scale(0.88,1.02)">84</text>
<circle cx="182.52" cy="553.18" r="17.1" fill="#a0a0a6" stroke="#333" stroke-width="1"/><circle cx="182.52" cy="553.18" r="12.6" fill="#ffffff" stroke="#000" stroke-width="2"/><text transform="translate(182.52,557.78) scale(0.88,1.02)">85</text>
<circle cx="178.70" cy="516.80" r="17.1" fill="#a0a0a6" stroke="#333" stroke-width="1"/><circle cx="178.70" cy="516.80" r="12.6" fill="#ffffff" stroke="#000" stroke-width="2"/><text transform="translate(178.70,521.40) scale(0.88,1.02)">86</text>
<circle cx="182.52" cy="480.42" r="17.1" fill="#a0a0a6" stroke="#333" stroke-width="1"/><circle cx="182.52" cy="480.42" r="12.6" fill="#ffffff" stroke="#000" stroke-width="2"/><text transform="translate(182.52,485.02) scale(0.88,1.02)">87</text>
<circle cx="193.83" cy="445.62" r="17.1" fill="#a0a0a6" stroke="#333" stroke-width="1"/><circle cx="193.83" cy="445.62" r="12.6" fill="#ffffff" stroke="#000" stroke-width="2"/><text transform="translate(193.83,450.22) scale(0.88,1.02)">88</text>
<circle cx="212.12" cy="413.94" r="17.1" fill="#a0a0a6" stroke="#333" stroke-width="1"/><circle cx="212.12" cy="413.94" r="12.6" fill="#ffffff" stroke="#000" stroke-width="2"/><text transform="translate(212.12,418.54) scale(0.88,1.02)">89</text>
<circle cx="236.60" cy="386.75" r="17.1" fill="#a0a0a6" stroke="#333" stroke-width="1"/><circle cx="236.60" cy="386.75" r="12.6" fill="#ffffff" stroke="#000" stroke-width="2"/><text transform="translate(236.60,391.35) scale(0.88,1.02)">90</text>
<circle cx="266.20" cy="365.25" r="17.1" fill="#a0a0a6" stroke="#333" stroke-width="1"/><circle cx="266.20" cy="365.25" r="12.6" fill="#ffffff" stroke="#000" stroke-width="2"/><text transform="translate(266.20,369.85) scale(0.88,1.02)">91</text>
<circle cx="299.62" cy="350.37" r="17.1" fill="#a0a0a6" stroke="#333" stroke-width="1"/><circle cx="299.62" cy="350.37" r="12.6" fill="#ffffff" stroke="#000" stroke-width="2"/><text transform="translate(299.62,354.97) scale(0.88,1.02)">92</text>
<circle cx="335.41" cy="342.76" r="17.1" fill="#a0a0a6" stroke="#333" stroke-width="1"/><circle cx="335.41" cy="342.76" r="12.6" fill="#ffffff" stroke="#000" stroke-width="2"/><text transform="translate(335.41,347.36) scale(0.88,1.02)">93</text>
<circle cx="371.99" cy="342.76" r="17.1" fill="#a0a0a6" stroke="#333" stroke-width="1"/><circle cx="371.99" cy="342.76" r="12.6" fill="#ffffff" stroke="#000" stroke-width="2"/><text transform="translate(371.99,347.36) scale(0.88,1.02)">94</text>
<circle cx="407.78" cy="350.37" r="17.1" fill="#a0a0a6" stroke="#333" stroke-width="1"/><circle cx="407.78" cy="350.37" r="12.6" fill="#ffffff" stroke="#000" stroke-width="2"/><text transform="translate(407.78,354.97) scale(0.88,1.02)">95</text>
<circle cx="441.20" cy="365.25" r="17.1" fill="#a0a0a6" stroke="#333" stroke-width="1"/><circle cx="441.20" cy="365.25" r="12.6" fill="#ffffff" stroke="#000" stroke-width="2"/><text transform="translate(441.20,369.85) scale(0.88,1.02)">96</text>
<circle cx="470.80" cy="386.75" r="17.1" fill="#a0a0a6" stroke="#333" stroke-width="1"/><circle cx="470.80" cy="386.75" r="12.6" fill="#82a626" stroke="#000" stroke-width="2"/><text transform="translate(470.80,391.35) scale(0.88,1.02)">D1</text>
<circle cx="495.28" cy="413.94" r="17.1" fill="#a0a0a6" stroke="#333" stroke-width="1"/><circle cx="495.28" cy="413.94" r="12.6" fill="#82a626" stroke="#000" stroke-width="2"/><text transform="translate(495.28,418.54) scale(0.88,1.02)">D2</text>
<circle cx="513.57" cy="445.62" r="17.1" fill="#a0a0a6" stroke="#333" stroke-width="1"/><circle cx="513.57" cy="445.62" r="12.6" fill="#82a626" stroke="#000" stroke-width="2"/><text transform="translate(513.57,450.22) scale(0.88,1.02)">D3</text>
<circle cx="524.88" cy="480.42" r="17.1" fill="#a0a0a6" stroke="#333" stroke-width="1"/><circle cx="524.88" cy="480.42" r="12.6" fill="#82a626" stroke="#000" stroke-width="2"/><text transform="translate(524.88,485.02) scale(0.88,1.02)">W</text>
</g></svg>

<div class="lr" style="left:25px;top:812px;border-color:#a0a0a0"></div>
<div class="t b" style="left:62px;top:816px">Empty</div>
<div class="lr" style="left:25px;top:844px;border-color:#007800"></div>
<div class="t b" style="left:62px;top:849px">Untested</div>
<div class="lr" style="left:25px;top:878px;border-color:#00ff00"></div>
<div class="t b" style="left:62px;top:881px">Testing</div>
<div class="lr" style="left:25px;top:909px;border-color:#000080"></div>
<div class="t b" style="left:62px;top:913px">Finished</div>
<div class="lr" style="left:25px;top:943px;border-color:#ff0000"></div>
<div class="t b" style="left:62px;top:947px">Abnormal</div>

<div id="grp" class="a"></div>
<div class="a" style="left:921px;top:194px;width:129px;height:14px;background:#f2f3f8"></div>
<div class="t b" style="left:924px;top:195px;font-size:13.3px">Sample Information</div>
<div class="t b" style="left:935px;top:239px">Position</div>
<div class="fld" style="left:1049px;top:232px;width:168px"><div></div></div>
<div class="t b" style="left:1051px;top:237px">72</div>
<div class="t b" style="left:1255px;top:239px">Commodity</div>
<div class="fld" style="left:1369px;top:232px;width:168px"><div></div></div>
<div class="t b" style="left:1373px;top:237px">Standard</div>
<div class="t b" style="left:1590px;top:239px">Sample No.</div>
<div class="fld" style="left:1691px;top:232px;width:168px"><div></div></div>
<div class="t b" style="left:1694px;top:237px">C.F.A.S 950</div>

<div id="tbl" class="a"></div>
<div class="a" style="left:936px;top:287px;width:727.5px;height:22px;background:#f2f3f8"></div>
<div class="a" style="left:936px;top:309px;width:13px;height:294px;background:#f2f2f4"></div>
<div class="a" style="left:949px;top:309px;width:714.5px;height:20px;background:#4e5b77"></div>
<div class="a" style="left:949px;top:329px;width:714.5px;height:1px;background:#aab8d2"></div>
<div class="a" style="left:937px;top:328.5px;width:12px;height:2px;background:#000"></div>
<div class="a" style="left:949px;top:350px;width:714.5px;height:1px;background:#aab8d2"></div>
<div class="a" style="left:937px;top:349.5px;width:12px;height:2px;background:#000"></div>
<div class="a" style="left:949px;top:371px;width:714.5px;height:1px;background:#aab8d2"></div>
<div class="a" style="left:937px;top:370.5px;width:12px;height:2px;background:#000"></div>
<div class="a" style="left:949px;top:392px;width:714.5px;height:1px;background:#aab8d2"></div>
<div class="a" style="left:937px;top:391.5px;width:12px;height:2px;background:#000"></div>
<div class="a" style="left:949px;top:413px;width:714.5px;height:1px;background:#aab8d2"></div>
<div class="a" style="left:937px;top:412.5px;width:12px;height:2px;background:#000"></div>
<div class="a" style="left:949px;top:434px;width:714.5px;height:1px;background:#aab8d2"></div>
<div class="a" style="left:937px;top:433.5px;width:12px;height:2px;background:#000"></div>
<div class="a" style="left:949px;top:455px;width:714.5px;height:1px;background:#aab8d2"></div>
<div class="a" style="left:937px;top:454.5px;width:12px;height:2px;background:#000"></div>
<div class="a" style="left:949px;top:476px;width:714.5px;height:1px;background:#aab8d2"></div>
<div class="a" style="left:937px;top:475.5px;width:12px;height:2px;background:#000"></div>
<div class="a" style="left:949px;top:497px;width:714.5px;height:1px;background:#aab8d2"></div>
<div class="a" style="left:937px;top:496.5px;width:12px;height:2px;background:#000"></div>
<div class="a" style="left:949px;top:518px;width:714.5px;height:1px;background:#aab8d2"></div>
<div class="a" style="left:937px;top:517.5px;width:12px;height:2px;background:#000"></div>
<div class="a" style="left:949px;top:539px;width:714.5px;height:1px;background:#aab8d2"></div>
<div class="a" style="left:937px;top:538.5px;width:12px;height:2px;background:#000"></div>
<div class="a" style="left:949px;top:560px;width:714.5px;height:1px;background:#aab8d2"></div>
<div class="a" style="left:937px;top:559.5px;width:12px;height:2px;background:#000"></div>
<div class="a" style="left:949px;top:581px;width:714.5px;height:1px;background:#aab8d2"></div>
<div class="a" style="left:937px;top:580.5px;width:12px;height:2px;background:#000"></div>
<div class="a" style="left:949px;top:602px;width:714.5px;height:1px;background:#aab8d2"></div>
<div class="a" style="left:937px;top:601.5px;width:12px;height:2px;background:#000"></div>
<div class="a" style="left:1023.0px;top:309px;width:1px;height:294px;background:#aab8d2"></div>
<div class="a" style="left:1122.0px;top:309px;width:1px;height:294px;background:#aab8d2"></div>
<div class="a" style="left:1211.0px;top:309px;width:1px;height:294px;background:#aab8d2"></div>
<div class="a" style="left:1304.0px;top:309px;width:1px;height:294px;background:#aab8d2"></div>
<div class="a" style="left:1393.0px;top:309px;width:1px;height:294px;background:#aab8d2"></div>
<div class="a" style="left:1485.0px;top:309px;width:1px;height:294px;background:#aab8d2"></div>
<div class="a" style="left:1574.0px;top:309px;width:1px;height:294px;background:#aab8d2"></div>
<div class="a" style="left:1663.0px;top:309px;width:1px;height:294px;background:#aab8d2"></div>
<div class="a" style="left:948.5px;top:287px;width:1.5px;height:22px;background:#000"></div>
<div class="a" style="left:1022.5px;top:287px;width:1.5px;height:22px;background:#000"></div>
<div class="a" style="left:1121.5px;top:287px;width:1.5px;height:22px;background:#000"></div>
<div class="a" style="left:1210.5px;top:287px;width:1.5px;height:22px;background:#000"></div>
<div class="a" style="left:1303.5px;top:287px;width:1.5px;height:22px;background:#000"></div>
<div class="a" style="left:1392.5px;top:287px;width:1.5px;height:22px;background:#000"></div>
<div class="a" style="left:1484.5px;top:287px;width:1.5px;height:22px;background:#000"></div>
<div class="a" style="left:1573.5px;top:287px;width:1.5px;height:22px;background:#000"></div>
<div class="a" style="left:1662.5px;top:287px;width:1.5px;height:22px;background:#000"></div>
<div class="a" style="left:948px;top:287px;width:1.4px;height:316px;background:#000"></div>
<div class="a" style="left:937px;top:307px;width:727.0px;height:2px;background:#000"></div>
<div class="t b" style="left:949px;top:291px;width:74.5px;text-align:center;overflow:hidden">Position</div>
<div class="t b" style="left:1023.5px;top:291px;width:99.0px;text-align:center;overflow:hidden">Test</div>
<div class="t b" style="left:1122.5px;top:291px;width:89.0px;text-align:center;overflow:hidden">eaction Degre</div>
<div class="t b" style="left:1211.5px;top:291px;width:93.0px;text-align:center;overflow:hidden">Result</div>
<div class="t b" style="left:1304.5px;top:291px;width:89.0px;text-align:center;overflow:hidden">Unit</div>
<div class="t b" style="left:1393.5px;top:291px;width:92.0px;text-align:center;overflow:hidden">Status</div>
<div class="t b" style="left:1485.5px;top:291px;width:89.0px;text-align:center;overflow:hidden">Repeat No.</div>
<div class="t b" style="left:1574.5px;top:291px;width:89.0px;text-align:center;overflow:hidden">Dilution Ratio</div>
<div class="t b" style="left:949px;top:312.5px;width:74.5px;text-align:center;color:#fff">72</div>
<div class="t b" style="left:1023.5px;top:312.5px;width:99.0px;text-align:center;color:#fff">ALP</div>
<div class="t b" style="left:1211.5px;top:312.5px;width:93.0px;text-align:center;color:#fff">485</div>
<div class="t b" style="left:1393.5px;top:312.5px;width:92.0px;text-align:center;color:#fff">R1</div>
<div class="t b" style="left:1485.5px;top:312.5px;width:89.0px;text-align:center;color:#fff">1</div>
<div class="t b" style="left:1574.5px;top:312.5px;width:89.0px;text-align:center;color:#fff">1</div>
<div class="t b" style="left:949px;top:333.5px;width:74.5px;text-align:center;color:#000">72</div>
<div class="t b" style="left:1023.5px;top:333.5px;width:99.0px;text-align:center;color:#000">ALT</div>
<div class="t b" style="left:1211.5px;top:333.5px;width:93.0px;text-align:center;color:#000">85.3</div>
<div class="t b" style="left:1304.5px;top:333.5px;width:89.0px;text-align:center;color:#000">U/L</div>
<div class="t b" style="left:1393.5px;top:333.5px;width:92.0px;text-align:center;color:#000">R1</div>
<div class="t b" style="left:1485.5px;top:333.5px;width:89.0px;text-align:center;color:#000">1</div>
<div class="t b" style="left:1574.5px;top:333.5px;width:89.0px;text-align:center;color:#000">1</div>
<div class="t b" style="left:949px;top:354.5px;width:74.5px;text-align:center;color:#000">72</div>
<div class="t b" style="left:1023.5px;top:354.5px;width:99.0px;text-align:center;color:#000">AST</div>
<div class="t b" style="left:1211.5px;top:354.5px;width:93.0px;text-align:center;color:#000">92.1</div>
<div class="t b" style="left:1393.5px;top:354.5px;width:92.0px;text-align:center;color:#000">R1</div>
<div class="t b" style="left:1485.5px;top:354.5px;width:89.0px;text-align:center;color:#000">1</div>
<div class="t b" style="left:1574.5px;top:354.5px;width:89.0px;text-align:center;color:#000">1</div>
<div class="t b" style="left:949px;top:375.5px;width:74.5px;text-align:center;color:#000">72</div>
<div class="t b" style="left:1023.5px;top:375.5px;width:99.0px;text-align:center;color:#000">CAL</div>
<div class="t b" style="left:1211.5px;top:375.5px;width:93.0px;text-align:center;color:#000">10.6</div>
<div class="t b" style="left:1393.5px;top:375.5px;width:92.0px;text-align:center;color:#000">R1</div>
<div class="t b" style="left:1485.5px;top:375.5px;width:89.0px;text-align:center;color:#000">1</div>
<div class="t b" style="left:1574.5px;top:375.5px;width:89.0px;text-align:center;color:#000">1</div>
<div class="t b" style="left:949px;top:396.5px;width:74.5px;text-align:center;color:#000">72</div>
<div class="t b" style="left:1023.5px;top:396.5px;width:99.0px;text-align:center;color:#000">CHOL</div>
<div class="t b" style="left:1211.5px;top:396.5px;width:93.0px;text-align:center;color:#000">162</div>
<div class="t b" style="left:1393.5px;top:396.5px;width:92.0px;text-align:center;color:#000">S</div>
<div class="t b" style="left:1485.5px;top:396.5px;width:89.0px;text-align:center;color:#000">1</div>
<div class="t b" style="left:1574.5px;top:396.5px;width:89.0px;text-align:center;color:#000">1</div>
<div class="t b" style="left:949px;top:417.5px;width:74.5px;text-align:center;color:#000">72</div>
<div class="t b" style="left:1023.5px;top:417.5px;width:99.0px;text-align:center;color:#000">CREAT</div>
<div class="t b" style="left:1211.5px;top:417.5px;width:93.0px;text-align:center;color:#000">3.73</div>
<div class="t b" style="left:1393.5px;top:417.5px;width:92.0px;text-align:center;color:#000">R1</div>
<div class="t b" style="left:1485.5px;top:417.5px;width:89.0px;text-align:center;color:#000">1</div>
<div class="t b" style="left:1574.5px;top:417.5px;width:89.0px;text-align:center;color:#000">1</div>
<div class="t b" style="left:949px;top:438.5px;width:74.5px;text-align:center;color:#000">72</div>
<div class="t b" style="left:1023.5px;top:438.5px;width:99.0px;text-align:center;color:#000">GLU</div>
<div class="t b" style="left:1211.5px;top:438.5px;width:93.0px;text-align:center;color:#000">195</div>
<div class="t b" style="left:1393.5px;top:438.5px;width:92.0px;text-align:center;color:#000">S</div>
<div class="t b" style="left:1485.5px;top:438.5px;width:89.0px;text-align:center;color:#000">1</div>
<div class="t b" style="left:1574.5px;top:438.5px;width:89.0px;text-align:center;color:#000">1</div>
<div class="t b" style="left:949px;top:459.5px;width:74.5px;text-align:center;color:#000">72</div>
<div class="t b" style="left:1023.5px;top:459.5px;width:99.0px;text-align:center;color:#000">IRON</div>
<div class="t b" style="left:1211.5px;top:459.5px;width:93.0px;text-align:center;color:#000">196</div>
<div class="t b" style="left:1393.5px;top:459.5px;width:92.0px;text-align:center;color:#000">S</div>
<div class="t b" style="left:1485.5px;top:459.5px;width:89.0px;text-align:center;color:#000">1</div>
<div class="t b" style="left:1574.5px;top:459.5px;width:89.0px;text-align:center;color:#000">1</div>
<div class="t b" style="left:949px;top:480.5px;width:74.5px;text-align:center;color:#000">72</div>
<div class="t b" style="left:1023.5px;top:480.5px;width:99.0px;text-align:center;color:#000">LDH</div>
<div class="t b" style="left:1211.5px;top:480.5px;width:93.0px;text-align:center;color:#000">473</div>
<div class="t b" style="left:1393.5px;top:480.5px;width:92.0px;text-align:center;color:#000">S</div>
<div class="t b" style="left:1485.5px;top:480.5px;width:89.0px;text-align:center;color:#000">1</div>
<div class="t b" style="left:1574.5px;top:480.5px;width:89.0px;text-align:center;color:#000">1</div>
<div class="t b" style="left:949px;top:501.5px;width:74.5px;text-align:center;color:#000">72</div>
<div class="t b" style="left:1023.5px;top:501.5px;width:99.0px;text-align:center;color:#000">MG</div>
<div class="t b" style="left:1211.5px;top:501.5px;width:93.0px;text-align:center;color:#000">2.46</div>
<div class="t b" style="left:1393.5px;top:501.5px;width:92.0px;text-align:center;color:#000">S</div>
<div class="t b" style="left:1485.5px;top:501.5px;width:89.0px;text-align:center;color:#000">1</div>
<div class="t b" style="left:1574.5px;top:501.5px;width:89.0px;text-align:center;color:#000">1</div>
<div class="t b" style="left:949px;top:522.5px;width:74.5px;text-align:center;color:#000">72</div>
<div class="t b" style="left:1023.5px;top:522.5px;width:99.0px;text-align:center;color:#000">PHOS</div>
<div class="t b" style="left:1211.5px;top:522.5px;width:93.0px;text-align:center;color:#000">5.04</div>
<div class="t b" style="left:1393.5px;top:522.5px;width:92.0px;text-align:center;color:#000">S</div>
<div class="t b" style="left:1485.5px;top:522.5px;width:89.0px;text-align:center;color:#000">1</div>
<div class="t b" style="left:1574.5px;top:522.5px;width:89.0px;text-align:center;color:#000">1</div>
<div class="t b" style="left:949px;top:543.5px;width:74.5px;text-align:center;color:#000">72</div>
<div class="t b" style="left:1023.5px;top:543.5px;width:99.0px;text-align:center;color:#000">T.P</div>
<div class="t b" style="left:1211.5px;top:543.5px;width:93.0px;text-align:center;color:#000">5.5</div>
<div class="t b" style="left:1393.5px;top:543.5px;width:92.0px;text-align:center;color:#000">R1</div>
<div class="t b" style="left:1485.5px;top:543.5px;width:89.0px;text-align:center;color:#000">1</div>
<div class="t b" style="left:1574.5px;top:543.5px;width:89.0px;text-align:center;color:#000">1</div>
<div class="t b" style="left:949px;top:564.5px;width:74.5px;text-align:center;color:#000">72</div>
<div class="t b" style="left:1023.5px;top:564.5px;width:99.0px;text-align:center;color:#000">TG</div>
<div class="t b" style="left:1211.5px;top:564.5px;width:93.0px;text-align:center;color:#000">141</div>
<div class="t b" style="left:1393.5px;top:564.5px;width:92.0px;text-align:center;color:#000">S</div>
<div class="t b" style="left:1485.5px;top:564.5px;width:89.0px;text-align:center;color:#000">1</div>
<div class="t b" style="left:1574.5px;top:564.5px;width:89.0px;text-align:center;color:#000">1</div>
<div class="t b" style="left:949px;top:585.5px;width:74.5px;text-align:center;color:#000">72</div>
<div class="t b" style="left:1023.5px;top:585.5px;width:99.0px;text-align:center;color:#000">UREA</div>
<div class="t b" style="left:1211.5px;top:585.5px;width:93.0px;text-align:center;color:#000">100</div>
<div class="t b" style="left:1393.5px;top:585.5px;width:92.0px;text-align:center;color:#000">S</div>
<div class="t b" style="left:1485.5px;top:585.5px;width:89.0px;text-align:center;color:#000">1</div>
<div class="t b" style="left:1574.5px;top:585.5px;width:89.0px;text-align:center;color:#000">1</div>
<svg class="a" style="left:939px;top:312px" width="9" height="13"><path d="M1 1 L7 6.5 L1 12 Z" fill="#000"/></svg>
<div class="a" style="left:1841px;top:287px;width:17px;height:594px;background:linear-gradient(90deg,#aebbd0,#c4cedd 50%,#b0bdd1)"></div>
<div class="a" style="left:1841px;top:287px;width:17px;height:17px;border-radius:3px;background:linear-gradient(#8395b2,#5e6f8e)"></div>
<svg class="a" style="left:1841px;top:287px" width="17" height="17"><path d="M3.5 11.5 L8.5 5.5 L13.5 11.5 Z" fill="#e8ecf4"/></svg>
<div class="a" style="left:1841px;top:304px;width:17px;height:290px;border-radius:3px;background:linear-gradient(#8090ab,#7080a0 30%,#5c6c8c)"></div>
<div class="a" style="left:1845px;top:445px;width:8px;height:1px;background:#c8d0de;box-shadow:0 2px 0 #c8d0de,0 4px 0 #c8d0de,0 6px 0 #c8d0de"></div>
<div class="a" style="left:1841px;top:863px;width:17px;height:18px;border-radius:3px;background:linear-gradient(#8395b2,#5e6f8e)"></div>
<svg class="a" style="left:1841px;top:863px" width="17" height="18"><path d="M3.5 6 L8.5 12 L13.5 6 Z" fill="#e8ecf4"/></svg>

<div class="btn" style="left:915px;width:256px"></div>
<div class="btn" style="left:1171px;width:256px"></div>
<div class="btn" style="left:1427px;width:256px"></div>
<div class="t b" style="left:994px;top:937px">Reaction Curve</div>
<div class="t b" style="left:1249px;top:937px">Refresh Volume</div>
<div class="t b" style="left:1535px;top:937px">Retest</div>

<div id="bot" class="a"></div>
<svg class="a" style="left:15.700000000000003px;top:1000.4000000000001px" width="80" height="80" viewBox="15.700000000000003 1000.4000000000001 80 80">
<defs><linearGradient id="gp" x1="0" y1="0" x2="0" y2="1"><stop offset="0" stop-color="#c6c6c6"/><stop offset="0.5" stop-color="#a2a2a2"/><stop offset="1" stop-color="#7c7c7c"/></linearGradient></defs>
<ellipse cx="57.2" cy="1042.4" rx="33" ry="29.4" fill="#5a6476" opacity=".35"/>
<ellipse cx="55.7" cy="1040.4" rx="33" ry="29.4" fill="#eef2fa"/>
<ellipse cx="55.7" cy="1040.4" rx="31" ry="27.4" fill="url(#gp)"/>
<path d="M39.5 1025 L69 1040.5 L39.5 1056 Z" fill="#6a6a6a" opacity=".5"/><path d="M40.5 1025 L69 1040.5 L40.5 1056 Z" fill="#f2f2f2"/>
</svg>
<svg class="a" style="left:101.19999999999999px;top:1001px" width="80" height="80" viewBox="101.19999999999999 1001 80 80">
<defs><linearGradient id="gb1" x1="0" y1="0" x2="0" y2="1"><stop offset="0" stop-color="#98d8f0"/><stop offset="0.5" stop-color="#5ca8d8"/><stop offset="1" stop-color="#2e7cbc"/></linearGradient></defs>
<ellipse cx="142.7" cy="1043" rx="32.7" ry="29.2" fill="#5a6476" opacity=".35"/>
<ellipse cx="141.2" cy="1041" rx="32.7" ry="29.2" fill="#eef2fa"/>
<ellipse cx="141.2" cy="1041" rx="30.700000000000003" ry="27.2" fill="url(#gb1)"/>
<rect x="125.2" y="1026.5" width="12.8" height="29.4" rx="1.5" fill="#f2f2f2"/><rect x="143.1" y="1026.5" width="14" height="29.4" rx="1.5" fill="#f2f2f2"/>
</svg>
<svg class="a" style="left:186.1px;top:1000.2px" width="80" height="80" viewBox="186.1 1000.2 80 80">
<defs><linearGradient id="gb2" x1="0" y1="0" x2="0" y2="1"><stop offset="0" stop-color="#98d8f0"/><stop offset="0.5" stop-color="#5ca8d8"/><stop offset="1" stop-color="#2e7cbc"/></linearGradient></defs>
<ellipse cx="227.6" cy="1042.2" rx="32.3" ry="28.8" fill="#5a6476" opacity=".35"/>
<ellipse cx="226.1" cy="1040.2" rx="32.3" ry="28.8" fill="#eef2fa"/>
<ellipse cx="226.1" cy="1040.2" rx="30.299999999999997" ry="26.8" fill="url(#gb2)"/>
<rect x="209.7" y="1025.7" width="32.3" height="29.2" rx="1.5" fill="#f2f2f2"/>
</svg>
<svg class="a" style="left:1820.2px;top:999.5px" width="80" height="80" viewBox="1820.2 999.5 80 80">
<defs><linearGradient id="gg" x1="0" y1="0" x2="0" y2="1"><stop offset="0" stop-color="#ace292"/><stop offset="0.5" stop-color="#6cb852"/><stop offset="1" stop-color="#42982c"/></linearGradient></defs>
<ellipse cx="1861.7" cy="1041.5" rx="32.8" ry="29" fill="#5a6476" opacity=".35"/>
<ellipse cx="1860.2" cy="1039.5" rx="32.8" ry="29" fill="#eef2fa"/>
<ellipse cx="1860.2" cy="1039.5" rx="30.799999999999997" ry="27" fill="url(#gg)"/>
<defs><linearGradient id="gl" x1="0" y1="0" x2="0" y2="1"><stop offset="0" stop-color="#fff"/><stop offset="0.45" stop-color="#f4f4f4"/><stop offset="0.5" stop-color="#dcdcdc"/><stop offset="1" stop-color="#d8d8d8"/></linearGradient></defs><ellipse cx="1854.4" cy="1035.6" rx="12.6" ry="11.6" fill="none" stroke="#f6f6f6" stroke-width="3.4"/><ellipse cx="1854.4" cy="1035.6" rx="9.6" ry="8.8" fill="url(#gl)"/><path d="M1865 1045 L1873.5 1053" stroke="#f6f6f6" stroke-width="6" stroke-linecap="round"/>
</svg>
<div class="a" style="left:293px;top:1014px;width:1517px;height:60px;border-top:2px solid #4c5c7a;border-left:3px solid #4f5f7d;border-right:3px solid #ececec;border-bottom:3px solid #ececec;background:linear-gradient(#dfe3ea,#c2c8d3 50%,#a0aabb);box-shadow:inset 1px 1px 0 #eef0f4"></div>
</body></html>
